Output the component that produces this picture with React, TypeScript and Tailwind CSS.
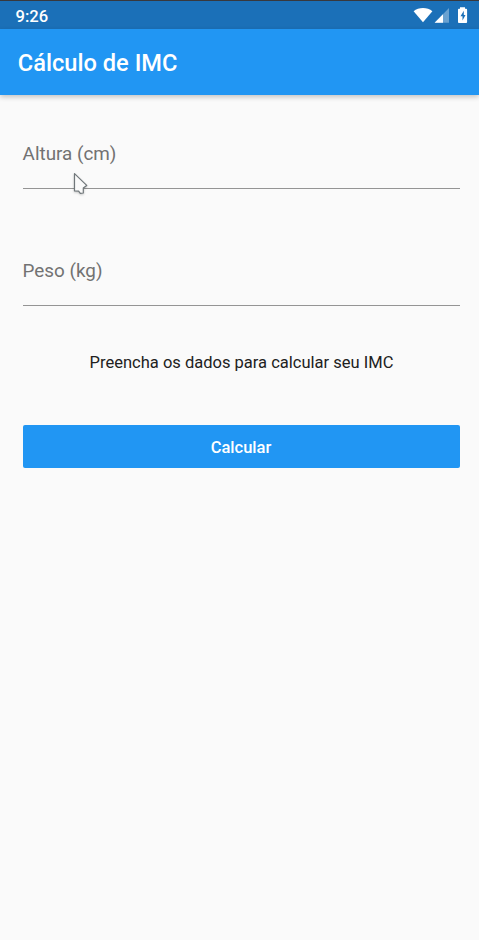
function StatusIcons() {
  return (
    <svg width="56" height="20" viewBox="412 5 56 20" fill="#fff" aria-hidden="true">
      <path d="M413.6 11.3C418.6 7 427.4 7 432.4 11.3L423 22.3Z" />
      <path d="M449 8V22.8H434.6Z" fillOpacity=".35" />
      <path d="M443 14.2V22.8H434.6Z" />
      <path
        fillRule="evenodd"
        d="M460 7.2h5v1.6h1.2q.9 0 .9.9v12.4q0 .9-.9.9h-7.3q-.9 0-.9-.9V9.7q0-.9.9-.9H460ZM463.8 10.8l-3.3 5.5h2v4.2l3-5.6h-1.7Z"
      />
    </svg>
  );
}

function Field({ label }: { label: string }) {
  return (
    <label className="block h-[65px] border-b border-[#949494] pt-[18px] text-[18.88px] leading-6 text-[#727272]">
      {label}
    </label>
  );
}

function Pointer() {
  return (
    <svg
      className="absolute left-[70px] top-[170px] drop-shadow-[0_1px_1px_rgba(0,0,0,0.2)]"
      width="22"
      height="28"
      viewBox="70 170 22 28"
      aria-hidden="true"
    >
      <path
        d="M74.5 173.6V191L78.6 191.2L80.3 193.3L83.3 193V188L86.7 185.4Z"
        fill="#fafafa"
        stroke="#70777a"
        strokeWidth="1.2"
        strokeLinejoin="round"
      />
    </svg>
  );
}

export default function App() {
  return (
    <div className="relative flex h-[940px] w-[479px] flex-col overflow-hidden bg-[#fafafa] font-[Roboto,sans-serif]">
      <div className="flex h-[29px] shrink-0 items-center justify-between border-t border-[#38383d] bg-[#1b70b8] pl-[15.5px] pr-[11px] text-white">
        <span className="pt-[3px] text-[16.6px] font-medium leading-5">9:26</span>
        <StatusIcons />
      </div>
      <header className="flex h-[66px] shrink-0 items-center bg-[#2196f3] pl-[17.8px] pt-[2px] shadow-[0_2px_5px_rgba(0,0,0,0.22)]">
        <h1 className="text-[23.65px] font-medium leading-7 text-white">Cálculo de IMC</h1>
      </header>
      <main className="flex flex-col pl-[22.6px] pr-[18.6px] pt-[29px]">
        <Field label="Altura (cm)" />
        <div className="h-[52px]" />
        <Field label="Peso (kg)" />
        <p className="mt-[47px] text-center text-[16.53px] leading-5 text-[#212121]">
          Preencha os dados para calcular seu IMC
        </p>
        <button className="mt-[52px] h-[43px] rounded-[2px] bg-[#2196f3] pr-[1px] pt-[2px] text-[16.53px] font-medium leading-5 text-white">
          Calcular
        </button>
      </main>
      <Pointer />
    </div>
  );
}
